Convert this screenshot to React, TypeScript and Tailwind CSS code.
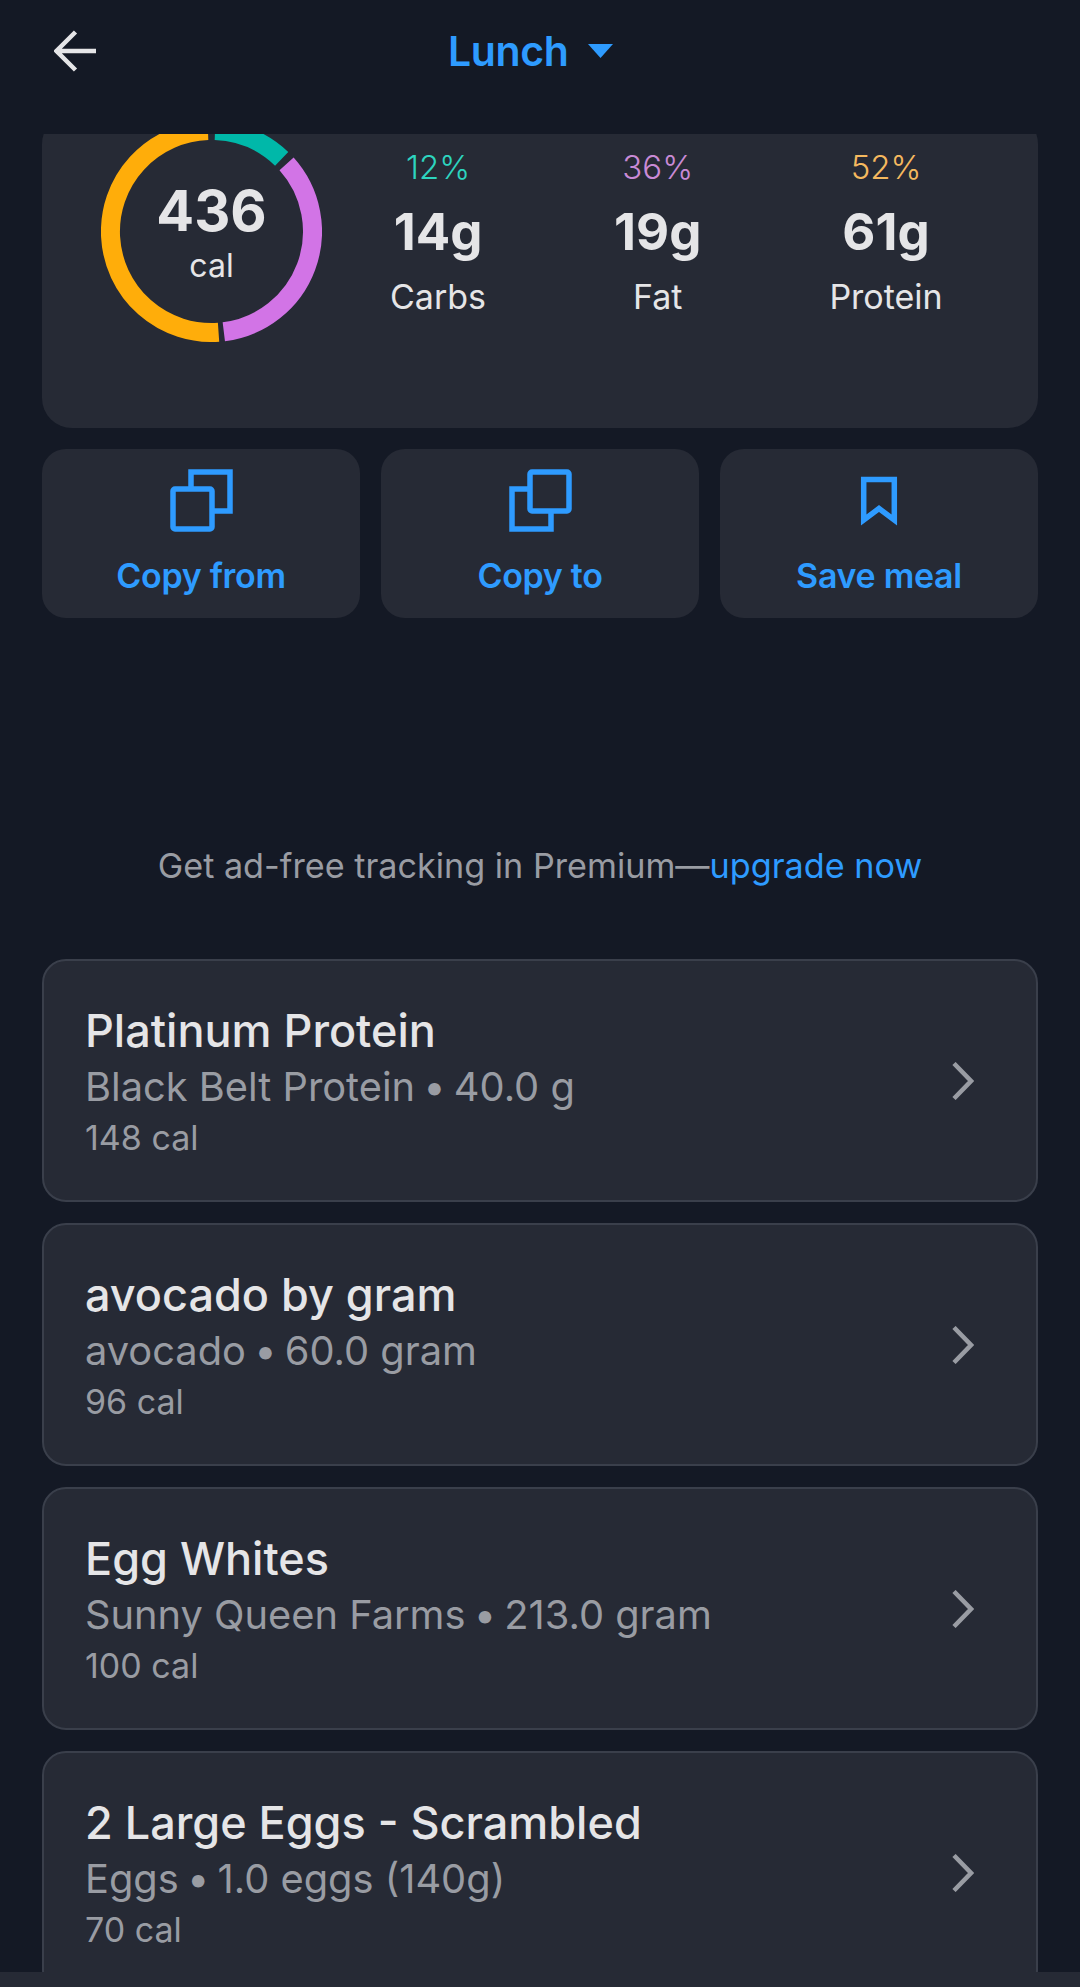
import React from "react";

const polar = (deg: number, r: number) => {
  const a = ((deg - 90) * Math.PI) / 180;
  return `${(110.5 + r * Math.cos(a)).toFixed(2)} ${(110.5 + r * Math.sin(a)).toFixed(2)}`;
};
const arc = (a: number, b: number, r = 101) =>
  `M ${polar(a, r)} A ${r} ${r} 0 ${b - a > 180 ? 1 : 0} 1 ${polar(b, r)}`;

const macros = [
  { pct: "12%", g: "14g", label: "Carbs", c: "text-[#2dd4bf]" },
  { pct: "36%", g: "19g", label: "Fat", c: "text-[#c98ad6]" },
  { pct: "52%", g: "61g", label: "Protein", c: "text-[#f5b95f]" },
];

const foods = [
  { t: "Platinum Protein", b: "Black Belt Protein", q: "40.0 g", c: "148 cal" },
  { t: "avocado by gram", b: "avocado", q: "60.0 gram", c: "96 cal" },
  { t: "Egg Whites", b: "Sunny Queen Farms", q: "213.0 gram", c: "100 cal" },
  { t: "2 Large Eggs - Scrambled", b: "Eggs", q: "1.0 eggs (140g)", c: "70 cal" },
];

function CopyIcon({ front }: { front: "bottom" | "top" }) {
  const a = <rect x="22" y="4" width="39" height="39" rx="2" />;
  const b = <rect x="4" y="21" width="39" height="40" rx="2" />;
  return (
    <svg width="64" height="64" viewBox="0 0 64 64" fill="none" stroke="#2e9bff" strokeWidth="5.5">
      {front === "bottom" ? (
        <>
          <path d="M22 21V4h39v39H43" />
          {b}
        </>
      ) : (
        <>
          <path d="M22 61H4V21h18M43 43v18H22" />
          {a}
        </>
      )}
    </svg>
  );
}

function Bookmark() {
  return (
    <svg width="64" height="64" viewBox="0 0 64 64" fill="none" stroke="#2e9bff" strokeWidth="5.5">
      <path d="M16.7 11.5h30.6V52L32 40.5 16.7 52z" />
    </svg>
  );
}

function ActionButton({ icon, label }: { icon: React.ReactNode; label: string }) {
  return (
    <div className="flex h-[169px] flex-1 flex-col items-center rounded-[24px] bg-[#262a35] pt-[19px]">
      {icon}
      <div className="mt-[22px] text-[34px] leading-[44px] font-semibold tracking-[-0.3px] text-[#2e9bff]">{label}</div>
    </div>
  );
}

export default function App() {
  return (
    <div className="flex h-[1987px] w-[1080px] flex-col overflow-hidden bg-[#141925] font-['Inter',sans-serif]">
      <header className="flex h-[134px] shrink-0 items-start pt-[30px] pl-[54px]">
        <svg width="42" height="42" viewBox="0 0 42 42" fill="none" stroke="#e5e5e7" strokeWidth="4.5">
          <path d="M42 21H3M21.5 2 2.5 21l19 19" />
        </svg>
        <div className="ml-[352px] text-[41px] leading-[42px] font-semibold tracking-[-0.4px] text-[#2e9bff]">Lunch</div>
        <svg className="mt-[14px] ml-[20px]" width="25" height="14" viewBox="0 0 25 14" fill="#2e9bff">
          <path d="M0 0h25L12.5 14z" />
        </svg>
      </header>

      <main className="min-h-0 flex-1 overflow-hidden px-[42px]">
        <div className="-mt-[20px]">
          <section className="flex h-[314px] rounded-[30px] bg-[#262a35] pt-[7px] pl-[59px]">
            <div className="relative h-[221px] w-[221px] shrink-0">
              <svg width="221" height="221" viewBox="0 0 221 221" fill="none" strokeWidth="19">
                <path d={arc(2, 44)} stroke="#00b8a9" />
                <path d={arc(48, 173)} stroke="#d274e6" />
                <path d={arc(176, 358)} stroke="#ffad0a" />
              </svg>
              <div className="absolute inset-0 flex flex-col items-center text-[#e5e5e7]">
                <div className="mt-[58px] text-[56px] leading-[64px] font-bold">436</div>
                <div className="mt-[3px] text-[32px] leading-[40px]">cal</div>
              </div>
            </div>
            <div className="mt-[26px] ml-[68px] flex items-start gap-[128px]">
              {macros.map((m) => (
                <div key={m.label} className="flex flex-col items-center">
                  <div className={`text-[33px] leading-[40px] font-light ${m.c}`}>{m.pct}</div>
                  <div className="mt-[13px] text-[51px] leading-[64px] font-bold text-[#e5e5e7]">{m.g}</div>
                  <div className="mt-[11px] text-[34px] leading-[44px] text-[#e5e5e7]">{m.label}</div>
                </div>
              ))}
            </div>
          </section>

          <section className="mt-[21px] flex gap-[21px]">
            <ActionButton icon={<CopyIcon front="bottom" />} label="Copy from" />
            <ActionButton icon={<CopyIcon front="top" />} label="Copy to" />
            <ActionButton icon={<Bookmark />} label="Save meal" />
          </section>

          <p className="mt-[226px] text-center text-[34.2px] leading-[44px] text-[#999ca3]">
            Get ad-free tracking in Premium—<span className="text-[#2e9bff]">upgrade now</span>
          </p>

          <section className="mt-[71px] flex flex-col gap-[21px]">
            {foods.map((f) => (
              <div key={f.t} className="flex h-[243px] items-center justify-between rounded-[24px] border-2 border-[#3a3f4b] bg-[#262a35] pr-[62px] pl-[41px]">
                <div>
                  <div className="mt-[2.5px] text-[45px] leading-[53px] font-medium text-[#e5e5e7]">{f.t}</div>
                  <div className="mt-[4.5px] text-[39.8px] leading-[52px] text-[#999ca3]">
                    {f.b} <span className="mx-[-3px]">•</span> {f.q}
                  </div>
                  <div className="mt-[3px] text-[34px] leading-[44px] text-[#999ca3]">{f.c}</div>
                </div>
                <svg width="24" height="38" viewBox="0 0 24 38" fill="none" stroke="#999ca3" strokeWidth="4.5">
                  <path d="M4 1.5 21 19 4 36.5" />
                </svg>
              </div>
            ))}
          </section>
        </div>
      </main>

      <div className="h-[15px] shrink-0 bg-[#262a35]" />
    </div>
  );
}
